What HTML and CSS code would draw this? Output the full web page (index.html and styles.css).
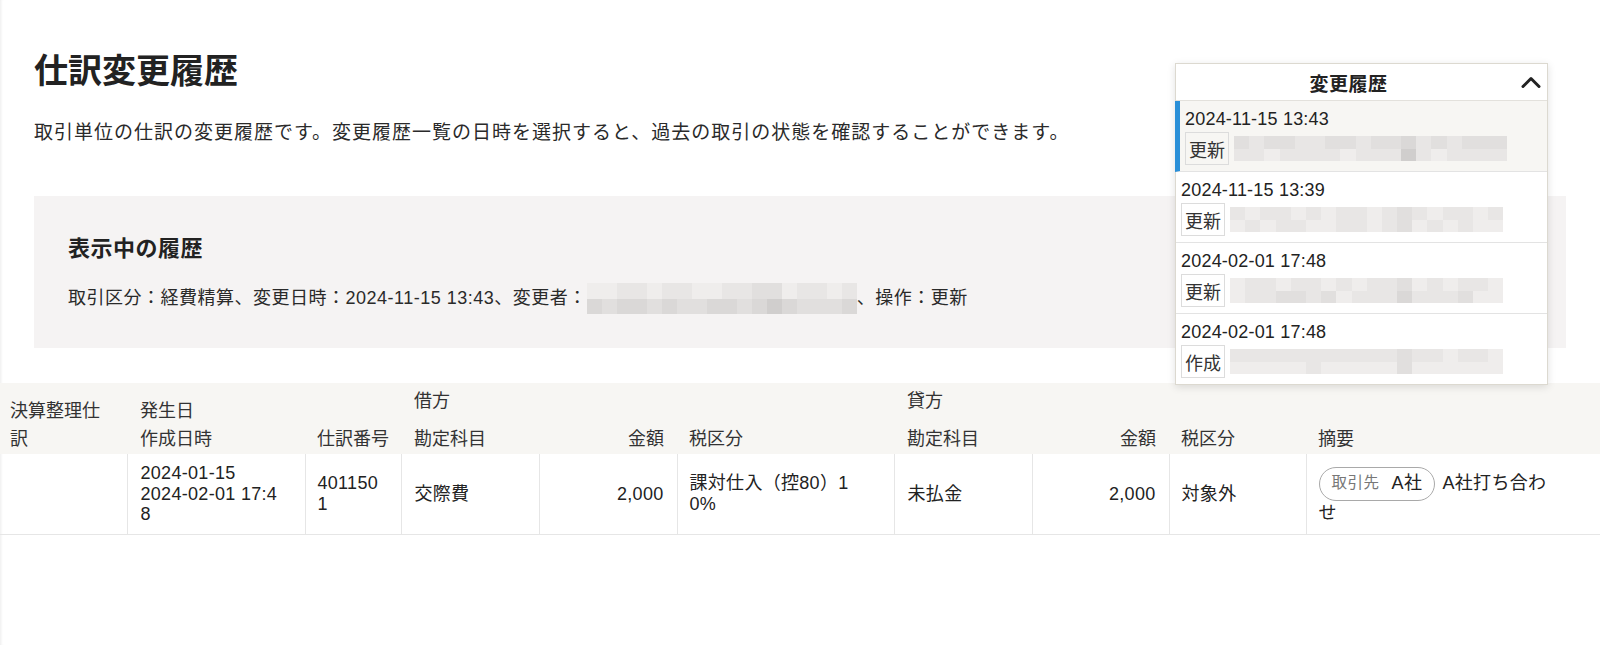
FILE: index.html
```html
<!DOCTYPE html>
<html lang="ja">
<head>
<meta charset="utf-8">
<title>仕訳変更履歴</title>
<link rel="stylesheet" href="styles.css">
</head>
<body>
<div class="page">
  <main class="content">
    <h1 class="title">仕訳変更履歴</h1>
    <p class="lead">取引単位の仕訳の変更履歴です。変更履歴一覧の日時を選択すると、過去の取引の状態を確認することができます。</p>
    <section class="current">
      <h2 class="current-title">表示中の履歴</h2>
      <div class="current-info">
        <span>取引区分：経費精算、変更日時：2024-11-15 13:43、変更者：</span>
        <span class="blur blur-lg">
          <i class="s0"></i><i class="s0"></i><i class="s1"></i><i class="s1"></i><i class="s0"></i><i class="s1"></i><i class="s1"></i><i class="s0"></i><i class="s0"></i><i class="s1"></i><i class="s1"></i><i class="s2"></i><i class="s2"></i><i class="s0"></i><i class="s1"></i><i class="s1"></i><i class="s0"></i><i class="s1"></i>
          <i class="s3"></i><i class="s2"></i><i class="s3"></i><i class="s3"></i><i class="s2"></i><i class="s3"></i><i class="s2"></i><i class="s2"></i><i class="s3"></i><i class="s3"></i><i class="s2"></i><i class="s3"></i><i class="s4"></i><i class="s3"></i><i class="s2"></i><i class="s2"></i><i class="s2"></i><i class="s3"></i>
        </span>
        <span>、操作：更新</span>
      </div>
    </section>
  </main>

  <table class="journal">
    <colgroup>
      <col class="w1"><col class="w2"><col class="w3"><col class="w4"><col class="w5">
      <col class="w6"><col class="w7"><col class="w8"><col class="w9"><col class="w10">
    </colgroup>
    <thead>
      <tr>
        <th rowspan="2" class="c1 rs">決算整理仕訳</th>
        <th rowspan="2" class="c2 rs">発生日<br>作成日時</th>
        <th rowspan="2" class="c3 rs">仕訳番号</th>
        <th colspan="3" class="c4">借方</th>
        <th colspan="3" class="c7">貸方</th>
        <th rowspan="2" class="c10 rs">摘要</th>
      </tr>
      <tr>
        <th class="c4">勘定科目</th>
        <th class="num">金額</th>
        <th class="c6">税区分</th>
        <th class="c7">勘定科目</th>
        <th class="num">金額</th>
        <th class="c9">税区分</th>
      </tr>
    </thead>
    <tbody>
      <tr>
        <td class="c1"></td>
        <td class="c2 wrap">2024-01-15<br>2024-02-01 17:48</td>
        <td class="c3 wrap">4011501</td>
        <td class="c4">交際費</td>
        <td class="num">2,000</td>
        <td class="c6 wrap">課対仕入（控80）10%</td>
        <td class="c7">未払金</td>
        <td class="num">2,000</td>
        <td class="c9">対象外</td>
        <td class="c10"><span class="pill"><span class="pill-key">取引先</span><span class="pill-val">A社</span></span> A社打ち合わせ</td>
      </tr>
    </tbody>
  </table>

  <aside class="history">
    <div class="history-head">
      <span class="history-title">変更履歴</span>
      <svg class="chev" viewBox="0 0 20 12" aria-hidden="true"><polyline points="2,10.5 10,2.5 18,10.5" fill="none" stroke="#222" stroke-width="3" stroke-linecap="round" stroke-linejoin="round"/></svg>
    </div>
    <div class="h-item active">
      <div class="h-date">2024-11-15 13:43</div>
      <div class="h-row">
        <span class="badge">更新</span>
        <span class="blur blur-sm">
          <i class="s2"></i><i class="s1"></i><i class="s2"></i><i class="s2"></i><i class="s1"></i><i class="s1"></i><i class="s2"></i><i class="s2"></i><i class="s1"></i><i class="s2"></i><i class="s2"></i><i class="s3"></i><i class="s1"></i><i class="s2"></i><i class="s1"></i><i class="s2"></i><i class="s2"></i><i class="s2"></i>
          <i class="s1"></i><i class="s1"></i><i class="s0"></i><i class="s1"></i><i class="s1"></i><i class="s1"></i><i class="s1"></i><i class="s0"></i><i class="s1"></i><i class="s1"></i><i class="s1"></i><i class="s4"></i><i class="s1"></i><i class="s0"></i><i class="s1"></i><i class="s1"></i><i class="s1"></i><i class="s1"></i>
        </span>
      </div>
    </div>
    <div class="h-item">
      <div class="h-date">2024-11-15 13:39</div>
      <div class="h-row">
        <span class="badge">更新</span>
        <span class="blur blur-sm">
          <i class="s1"></i><i class="s0"></i><i class="s1"></i><i class="s1"></i><i class="s0"></i><i class="s1"></i><i class="s0"></i><i class="s1"></i><i class="s1"></i><i class="s0"></i><i class="s1"></i><i class="s2"></i><i class="s1"></i><i class="s0"></i><i class="s1"></i><i class="s1"></i><i class="s0"></i><i class="s1"></i>
          <i class="s0"></i><i class="s1"></i><i class="s0"></i><i class="s1"></i><i class="s1"></i><i class="s0"></i><i class="s0"></i><i class="s1"></i><i class="s1"></i><i class="s0"></i><i class="s1"></i><i class="s2"></i><i class="s0"></i><i class="s1"></i><i class="s0"></i><i class="s1"></i><i class="s0"></i><i class="s0"></i>
        </span>
      </div>
    </div>
    <div class="h-item">
      <div class="h-date">2024-02-01 17:48</div>
      <div class="h-row">
        <span class="badge">更新</span>
        <span class="blur blur-sm">
          <i class="s0"></i><i class="s1"></i><i class="s1"></i><i class="s0"></i><i class="s1"></i><i class="s1"></i><i class="s0"></i><i class="s1"></i><i class="s0"></i><i class="s1"></i><i class="s1"></i><i class="s2"></i><i class="s0"></i><i class="s1"></i><i class="s0"></i><i class="s1"></i><i class="s1"></i><i class="s0"></i>
          <i class="s0"></i><i class="s1"></i><i class="s1"></i><i class="s2"></i><i class="s2"></i><i class="s1"></i><i class="s2"></i><i class="s0"></i><i class="s1"></i><i class="s1"></i><i class="s1"></i><i class="s3"></i><i class="s1"></i><i class="s1"></i><i class="s1"></i><i class="s2"></i><i class="s0"></i><i class="s0"></i>
        </span>
      </div>
    </div>
    <div class="h-item last">
      <div class="h-date">2024-02-01 17:48</div>
      <div class="h-row">
        <span class="badge">作成</span>
        <span class="blur blur-sm">
          <i class="s1"></i><i class="s1"></i><i class="s1"></i><i class="s1"></i><i class="s1"></i><i class="s1"></i><i class="s1"></i><i class="s1"></i><i class="s1"></i><i class="s1"></i><i class="s1"></i><i class="s2"></i><i class="s1"></i><i class="s1"></i><i class="s0"></i><i class="s1"></i><i class="s1"></i><i class="s0"></i>
          <i class="s0"></i><i class="s0"></i><i class="s0"></i><i class="s0"></i><i class="s0"></i><i class="s1"></i><i class="s0"></i><i class="s0"></i><i class="s0"></i><i class="s0"></i><i class="s0"></i><i class="s2"></i><i class="s0"></i><i class="s0"></i><i class="s0"></i><i class="s0"></i><i class="s0"></i><i class="s0"></i>
        </span>
      </div>
    </div>
  </aside>
</div>
</body>
</html>
```
FILE: styles.css
```css
* { box-sizing: border-box; }
html, body { margin: 0; padding: 0; background: #fff; }
body {
  font-family: "Liberation Sans", "Noto Sans CJK JP", sans-serif;
  color: #222;
  width: 1600px;
  height: 645px;
  overflow: hidden;
}
.page {
  position: relative;
  min-height: 645px;
  box-shadow: inset 3px 0 3px -2px rgba(0, 0, 0, 0.08);
}

/* header area */
.content { padding: 49px 34px 0; }
.title {
  margin: 0;
  font-size: 34px;
  line-height: 44px;
  font-weight: 700;
  color: #222;
}
.lead {
  margin: 26px 0 0;
  font-size: 19px;
  line-height: 28px;
  letter-spacing: 1px;
  color: #2a2a2a;
}
.current {
  margin-top: 49px;
  background: #f5f3f3;
  padding: 38px 34px 34px;
}
.current-title {
  margin: 0;
  font-size: 22px;
  line-height: 30px;
  font-weight: 700;
  letter-spacing: 0.5px;
  color: #222;
}
.current-info {
  margin-top: 19px;
  display: flex;
  align-items: center;
  font-size: 18px;
  line-height: 31px;
  letter-spacing: 0.5px;
  color: #2a2a2a;
}

/* pixelated blur blocks */
.blur { display: grid; flex: none; }
.blur i { display: block; }
.blur-lg { grid-template-columns: repeat(18, 15px); grid-auto-rows: 15.5px; }
.blur-sm { grid-template-columns: repeat(18, 15.2px); grid-auto-rows: 12.5px; }
.s0 { background: #efedec; }
.s1 { background: #e8e6e5; }
.s2 { background: #e1dfde; }
.s3 { background: #dad8d7; }
.s4 { background: #d0cecd; }
.s5 { background: #c7c5c4; }

/* journal table */
.journal {
  width: 1600px;
  margin-top: 35px;
  border-collapse: collapse;
  table-layout: fixed;
  font-size: 18px;
}
.w1 { width: 127px; } .w2 { width: 178px; } .w3 { width: 96px; } .w4 { width: 138px; }
.w5 { width: 138px; } .w6 { width: 217px; } .w7 { width: 138px; } .w8 { width: 137px; }
.w9 { width: 137px; } .w10 { width: 294px; }
.journal thead { background: #f7f6f3; }
.journal th {
  font-weight: 400;
  text-align: left;
  vertical-align: bottom;
  line-height: 28px;
  padding: 4px 13px;
  color: #333;
}
.journal thead tr + tr th { padding-top: 6px; padding-bottom: 1px; }
.journal th.rs { padding-bottom: 1px; }
.journal td {
  padding: 9px 13px;
  line-height: 20.5px;
  vertical-align: middle;
  letter-spacing: 0.3px;
  border-left: 1px solid #e6e6e6;
  border-bottom: 1px solid #e6e6e6;
  color: #222;
}
.journal td.c1 { border-left: 0; }
.journal .c1 { padding-left: 10px; padding-right: 14px; }
.journal td.c2 { padding-right: 25px; }
.journal th.c3 { padding-left: 12px; padding-right: 6px; }
.journal td.c3 { padding-left: 12px; padding-right: 16px; }
.journal .c6 { padding-left: 12px; padding-right: 40px; }
.journal .c9 { padding-left: 12px; }
.journal .c10 { padding-left: 12px; padding-right: 46px; }
.journal .num { text-align: right; padding-right: 13px; }
.journal .wrap { word-break: break-all; }

.pill {
  display: inline-flex;
  align-items: center;
  height: 34px;
  margin: 2px 3px 2px 0;
  padding: 0 12px;
  border: 1px solid #a9a9a9;
  border-radius: 17px;
  vertical-align: middle;
  background: #fff;
}
.pill-key { font-size: 15.5px; color: #777; letter-spacing: 0.5px; margin-right: 12px; }
.pill-val { font-size: 18px; color: #222; }

/* history dropdown */
.history {
  position: absolute;
  top: 63px;
  left: 1175px;
  width: 373px;
  background: #fff;
  border: 1px solid #dcd9d0;
  box-shadow: 0 2px 8px rgba(0, 0, 0, 0.12);
}
.history-head {
  display: flex;
  align-items: center;
  height: 37px;
  border-bottom: 1px solid #e3e1dc;
}
.history-title {
  flex: 1;
  text-align: center;
  font-size: 19px;
  font-weight: 700;
  letter-spacing: 0.5px;
  color: #222;
}
.chev { width: 20px; height: 12px; margin-right: 6px; }
.h-item {
  height: 71px;
  padding: 7px 8px 6px 5px;
  border-bottom: 1px solid #e3e3e3;
}
.h-item.last { border-bottom: 0; height: 70px; }
.h-item.active {
  background: #f7f6f3;
  border-left: 5px solid #2a8fd8;
  margin-left: -1px;
  padding-left: 5px;
}
.h-date {
  font-size: 18px;
  line-height: 22px;
  letter-spacing: 0.2px;
  color: #222;
}
.h-row {
  display: flex;
  align-items: center;
  margin-top: 2px;
  height: 33px;
}
.badge {
  display: inline-flex;
  align-items: center;
  height: 33px;
  padding: 0 3px;
  border: 1px solid #dcdcdc;
  background: #fff;
  font-size: 18px;
  color: #333;
  margin-right: 5px;
}
.active .badge { background: transparent; }
```
